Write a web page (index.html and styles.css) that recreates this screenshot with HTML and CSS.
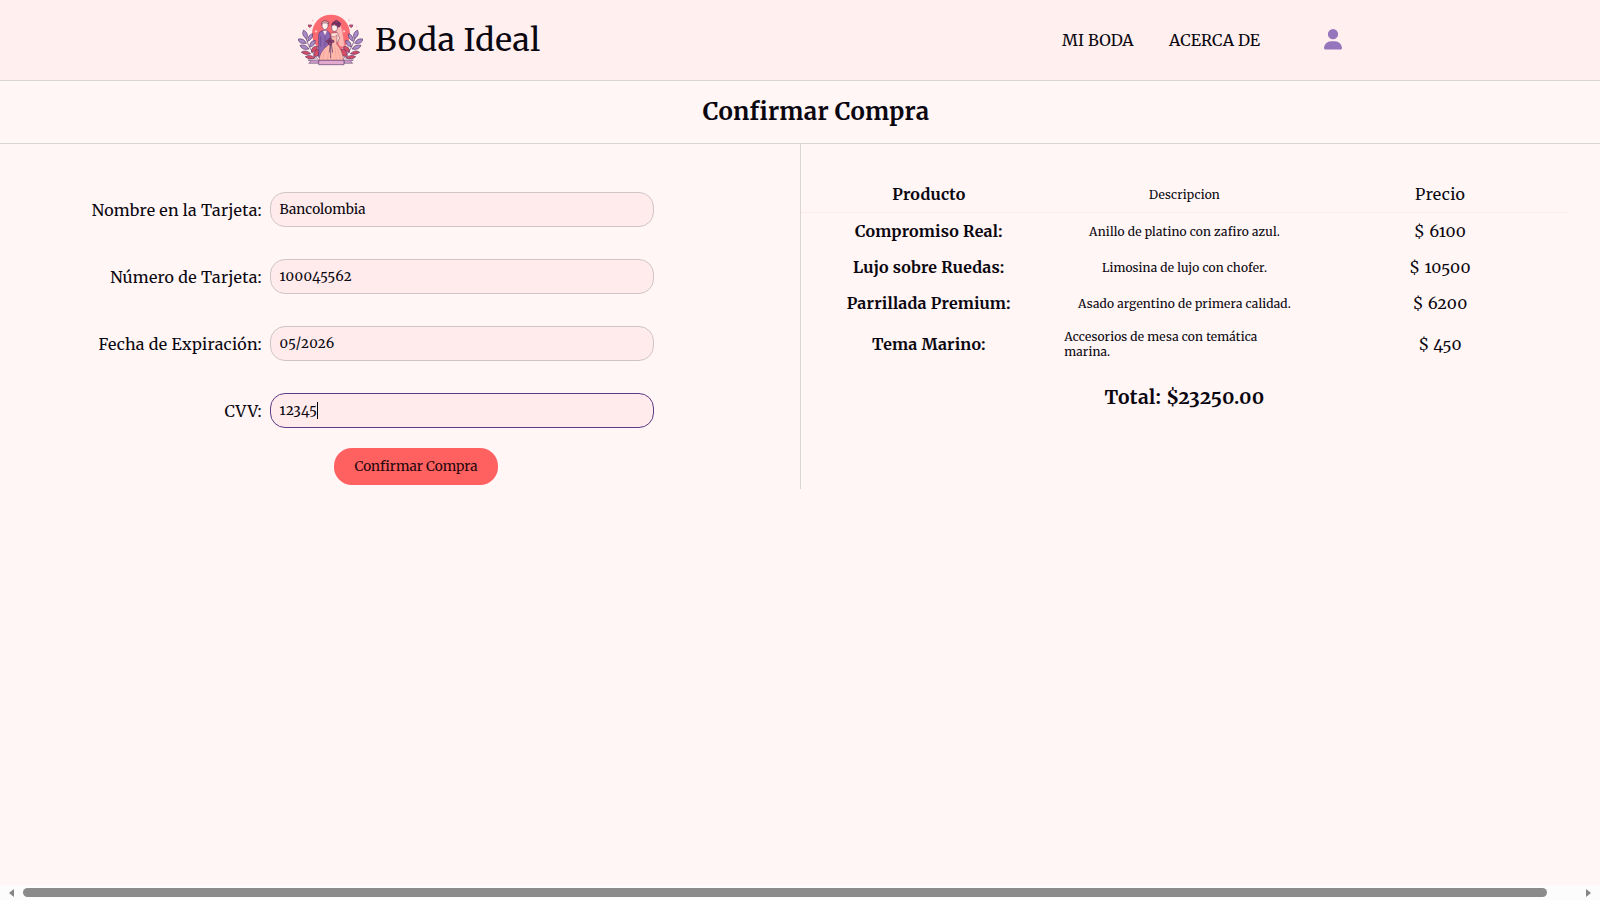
FILE: index.html
```html
<!DOCTYPE html>
<html lang="es">
<head>
<meta charset="utf-8">
<title>Boda Ideal</title>
<link rel="stylesheet" href="styles.css">
</head>
<body>
<header class="navbar">
  <div class="brand">
    <svg class="logo" viewBox="54 42 195 156">
      <circle cx="153" cy="101" r="57" fill="#fa6a70"/>
      <!-- leaves on both sides -->
      <g id="branch" stroke="#5b3a6b" stroke-width="2">
        <path d="M114 178C98 162 82 134 73 98" fill="none"/>
        <g fill="#a98bc8">
          <path d="M80 117Q62 104 71 90Q88 101 80 117Z"/>
          <path d="M79 130Q55 133 55 117Q72 114 79 130Z"/>
          <path d="M83 124Q84 103 98 101Q100 117 83 124Z"/>
          <path d="M87 147Q66 152 60 136Q77 131 87 147Z"/>
          <path d="M89 141Q89 122 106 121Q107 137 89 141Z"/>
        </g>
        <g fill="#d94a63">
          <path d="M92 161Q76 168 64 157Q77 147 92 161Z"/>
          <path d="M94 157Q94 137 112 139Q114 156 94 157Z"/>
          <path d="M106 174Q87 181 76 170Q90 161 106 174Z"/>
          <path d="M101 169Q104 141 120 149Q123 172 101 169Z"/>
        </g>
      </g>
      <use href="#branch" transform="translate(303 0) scale(-1 1)"/>
      <g fill="#d94a63" stroke="#5b3a6b" stroke-width="1.500">
        <path d="M89 83l-5-5q0-6 5-3q6-3 6 3z"/><path d="M213 83l-5-5q0-6 5-3q6-3 6 3z"/>
      </g>
      <path d="M108 90v8M104 94h8M192 90v8M188 94h8" stroke="#ffe5dd" stroke-width="2"/>
      <g fill="#e9a6ad"><circle cx="98" cy="61" r="2"/><circle cx="80" cy="88" r="1.500"/><circle cx="207" cy="60" r="2"/><circle cx="230" cy="80" r="1.500"/></g>
      <!-- veil -->
      <path d="M166 74Q184 68 187 96L194 137Q182 144 176 134Z" fill="#ffb9b5" stroke="#e9898c" stroke-width="1.500"/>
      <!-- groom -->
      <path d="M116 172V103Q117 95 127 92H140Q150 94 151 112V172Z" fill="#8e68b3" stroke="#5a3876" stroke-width="2"/>
      <path d="M129 92L135 106L141 92Z" fill="#fff0e8"/>
      <path d="M122 109V139M135 107V143" stroke="#5a3876" stroke-width="1.500"/>
      <path d="M126 70Q126 62 135 62Q144 62 144 70V80Q141 89 135 89Q127 88 126 78Z" fill="#fff0e8" stroke="#4c2b63" stroke-width="1.500"/>
      <path d="M125 73V66Q133 59 145 65V72L141 69H130Z" fill="#f4b09a" stroke="#4c2b63" stroke-width="1.500"/>
      <!-- bride -->
      <path d="M154 78Q153 67 163 64L176 64Q184 71 180 80L172 84L164 72Z" fill="#7c315c"/>
      <circle cx="169" cy="66" r="5" fill="#a83a62" stroke="#4c2b63" stroke-width="2"/>
      <circle cx="178" cy="72" r="4" fill="#8e3460" stroke="#4c2b63" stroke-width="2"/>
      <path d="M155 77Q163 72 172 79V88Q168 96 160 94Q154 90 155 77Z" fill="#fff0e8" stroke="#4c2b63" stroke-width="1.500"/>
      <path d="M153 99L172 98L179 114L171 130L153 127Z" fill="#ffe0d6" stroke="#763450" stroke-width="1.500"/>
      <path d="M155 108Q164 115 171 105L170 132Q187 150 191 181H117Q120 152 146 134L153 128Z" fill="#ffb9ac" stroke="#8a4560" stroke-width="1.500"/>
      <path d="M134 152L127 181M146 155L142 181M165 142L169 181M173 146L181 181" stroke="#ee9990" stroke-width="1.500"/>
      <path d="M151 132L148 157M152 132V175M154 132L158 158" stroke="#4c2b63" stroke-width="2"/>
      <g fill="#a74368" stroke="#4c2b63" stroke-width="2"><circle cx="143" cy="124" r="4"/><circle cx="150" cy="119" r="4"/><circle cx="158" cy="124" r="4"/><circle cx="150" cy="130" r="5"/></g>
      <!-- ribbon -->
      <path d="M116 180H84L93 184L86 190H116ZM192 180H220L212 184L218 190H192Z" fill="#c99bc7" stroke="#5b3a6b" stroke-width="1.500"/>
      <path d="M116 181H192V194H116Z" fill="#e3a9cf" stroke="#5b3a6b" stroke-width="2"/>
    </svg>
    <span class="brand-name">Boda Ideal</span>
  </div>
  <nav class="links">
    <span class="link-boda">MI BODA</span>
    <span class="link-about">ACERCA DE</span>
    <svg class="user" viewBox="0 0 448 512"><path fill="#9575bb" d="M224 256A128 128 0 1 0 224 0a128 128 0 1 0 0 256zm-45.700 48C79.800 304 0 383.800 0 482.300C0 498.700 13.300 512 29.700 512H418.300c16.400 0 29.700-13.300 29.700-29.700C448 383.800 368.200 304 269.700 304H178.300z"/></svg>
  </nav>
</header>
<h1 class="title">Confirmar Compra</h1>
<main class="content">
  <section class="payment">
    <div class="row"><label>Nombre en la Tarjeta:</label><div class="field">Bancolombia</div></div>
    <div class="row"><label>Número de Tarjeta:</label><div class="field digits">100045562</div></div>
    <div class="row"><label>Fecha de Expiración:</label><div class="field digits">05/2026</div></div>
    <div class="row"><label>CVV:</label><div class="field digits focused">12345<i class="caret"></i></div></div>
    <button class="confirm">Confirmar Compra</button>
  </section>
  <section class="summary">
    <div class="item head"><b>Producto</b><small>Descripcion</small><span>Precio</span></div>
    <div class="item"><b>Compromiso Real:</b><small>Anillo de platino con zafiro azul.</small><span>$ 6100</span></div>
    <div class="item"><b>Lujo sobre Ruedas:</b><small>Limosina de lujo con chofer.</small><span>$ 10500</span></div>
    <div class="item"><b>Parrillada Premium:</b><small>Asado argentino de primera calidad.</small><span>$ 6200</span></div>
    <div class="item tall"><b>Tema Marino:</b><small>Accesorios de mesa con temática<br>marina.</small><span>$ 450</span></div>
    <div class="total">Total: $23250.00</div>
  </section>
</main>
<footer class="scrollbar"><i class="arrow left"></i><div class="thumb"></div><i class="arrow right"></i></footer>
</body>
</html>
```
FILE: styles.css
```css
* { box-sizing: border-box; }
body {
  margin: 0;
  height: 900px;
  display: flex;
  flex-direction: column;
  overflow: hidden;
  background: #fff6f5;
  color: #0b0710;
  font: 16px/20px Merriweather, "DejaVu Serif Condensed", "DejaVu Serif", serif;
  font-variant-numeric: oldstyle-nums;
  font-optical-sizing: none;
  white-space: nowrap;
}
.navbar {
  height: 81px;
  flex: none;
  display: flex;
  justify-content: space-between;
  padding: 0 258px 0 298px;
  background: #ffefee;
  border-bottom: 1px solid #dad5d5;
}
.brand, .links { display: flex; align-items: center; }
.links { letter-spacing: 0.13px; }
.logo { width: 65px; height: 52px; }
.brand-name { margin-left: 12px; font-size: 32px; line-height: 40px; letter-spacing: 0.5px; }
.link-boda { width: 107px; }
.link-about { width: 155px; }
.user { width: 18px; height: 20.5px; margin-top: -1px; }
.title {
  height: 63px;
  flex: none;
  margin: 0;
  padding: 16px 0 0 32px;
  border-bottom: 1px solid #dad5d5;
  text-align: center;
  font-size: 24px;
  line-height: 30px;
  letter-spacing: 0.25px;
}
.content { display: flex; height: 345px; }
.payment { width: 800px; padding: 48px 146px 0 0; display: flex; flex-direction: column; }
.row { display: flex; justify-content: flex-end; height: 35px; margin-bottom: 32px; }
.row label { padding: 8px 8px 0 0; letter-spacing: 0.27px; }
.field {
  width: 384px;
  padding: 8px 8px 6px 8.5px;
  border: 1px solid #cfc5c7;
  border-radius: 15px;
  background: #ffebeb;
  font-size: 13.6px;
  line-height: 18px;
  letter-spacing: 0.05px;
  display: flex;
}
.digits { letter-spacing: 0.5px; }
.focused { border-color: #5c3a86; }
.caret { width: 1px; height: 17px; margin-left: -0.5px; background: #000; }
.confirm {
  width: 164px;
  height: 37px;
  margin: -12px 0 0 334px;
  padding: 0;
  border: 0;
  border-radius: 18px;
  background: #ff6060;
  color: #25070c;
  font: inherit;
  font-size: 13.6px;
}
.summary { width: 768px; padding-top: 32px; border-left: 1px solid #dad5d5; }
.item { display: grid; grid-template-columns: repeat(3, 1fr); height: 36px; align-items: center; justify-items: center; }
.item b { letter-spacing: 0.21px; }
.item span { letter-spacing: 0.35px; }
.item small { font-size: 12px; line-height: 15px; letter-spacing: 0.16px; }
.head { height: 37px; border-bottom: 1px solid #fcecec; }
.tall { height: 46px; }
.tall small { justify-self: start; margin-left: 7.5px; }
.total { padding-top: 18px; text-align: center; font-size: 19.2px; line-height: 24px; font-weight: bold; letter-spacing: 0.38px; }
.scrollbar { height: 15px; margin-top: auto; padding: 0 8px 0 9px; display: flex; align-items: center; background: #fcfcfc; }
.thumb { width: 1524px; height: 9px; margin: 0 39px 0 9px; border-radius: 5px; background: #8b8b8b; }
.arrow { flex: none; border: 4px solid transparent; }
.left { border-left: 0; border-right: 5px solid #858585; }
.right { border-right: 0; border-left: 5px solid #858585; }
```
